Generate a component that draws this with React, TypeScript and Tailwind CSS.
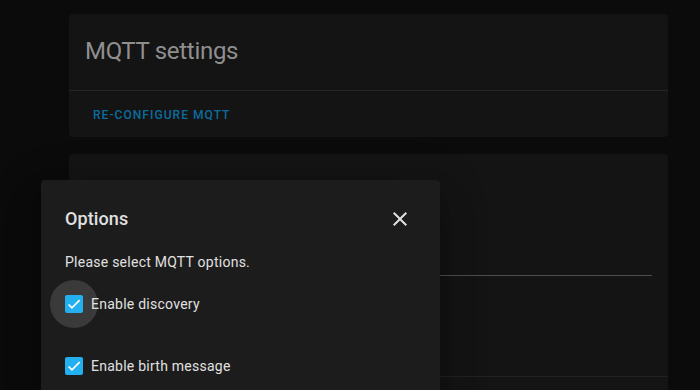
const CheckIcon = () => (
  <svg viewBox="0 0 24 24" className="w-[18px] h-[18px]" fill="none" stroke="white" strokeWidth={3.12}>
    <path d="M1.73,12.91 8.1,19.28 22.79,4.59" transform="translate(3.6 3.6) scale(0.7)" />
  </svg>
);

const CloseIcon = () => (
  <svg viewBox="0 0 24 24" className="w-6 h-6" fill="#e1e1e1">
    <path d="M19,6.41L17.59,5L12,10.59L6.41,5L5,6.41L10.59,12L5,17.59L6.41,19L12,13.41L17.59,19L19,17.59L13.41,12L19,6.41Z" />
  </svg>
);

interface OptionRowProps {
  label: string;
  focused?: boolean;
}

const OptionRow = ({ label, focused }: OptionRowProps) => (
  <div className="flex items-center h-12">
    <span className="relative w-[18px] h-[18px] shrink-0">
      {focused && <span className="absolute -inset-[15px] rounded-full bg-[#3a3a3a]" />}
      <span className="relative flex items-center justify-center w-[18px] h-[18px] rounded-[2px] bg-[#22b0f0]">
        <CheckIcon />
      </span>
    </span>
    <span className="relative ml-2 text-[14px] leading-5 tracking-[0.25px] text-[#e1e1e1]">{label}</span>
  </div>
);

export default function App() {
  return (
    <div
      className="relative h-[390px] w-[700px] overflow-hidden bg-[#0b0b0b]"
      style={{ fontFamily: "Roboto, 'Noto Sans', sans-serif" }}
    >
      <div className="ml-[69px] w-[599px] pt-[14px]">
        <div className="rounded-[4px] bg-[#141414]">
          <div className="h-[77px] px-4 pt-[21px] border-b border-[#262626]">
            <h1 className="text-[24px] leading-8 font-normal tracking-[-0.3px] text-[#8f8f8f]">MQTT settings</h1>
          </div>
          <div className="px-2 pt-[6px] pb-[4px]">
            <button className="h-9 px-4 text-[12px] font-medium tracking-[1.05px] uppercase text-[#0b6d9f]">
              Re-configure MQTT
            </button>
          </div>
        </div>

        <div className="mt-[17px] h-[260px] rounded-[4px] bg-[#141414]">
          <div className="px-4">
            <div className="h-[122px] border-b border-[#4d4d4d]" />
          </div>
          <div className="h-[101px] border-b border-[#222222]" />
        </div>
      </div>

      <div className="absolute left-[41px] top-[180px] w-[399px] h-[240px] rounded-[4px] bg-[#1c1c1c] shadow-[0_11px_15px_-7px_rgba(0,0,0,0.2),0_24px_38px_3px_rgba(0,0,0,0.14),0_9px_46px_8px_rgba(0,0,0,0.12)]">
        <div className="flex items-center justify-between pl-6 pr-7 pt-[23px]">
          <h2 className="text-[18px] leading-8 font-medium tracking-[0.1px] text-[#e1e1e1]">Options</h2>
          <CloseIcon />
        </div>
        <div className="px-6">
          <p className="mt-[17px] text-[14px] leading-5 tracking-[0.25px] text-[#e1e1e1]">
            Please select MQTT options.
          </p>
          <div className="mt-[8px] flex flex-col gap-[14px]">
            <OptionRow label="Enable discovery" focused />
            <OptionRow label="Enable birth message" />
          </div>
        </div>
      </div>
    </div>
  );
}
